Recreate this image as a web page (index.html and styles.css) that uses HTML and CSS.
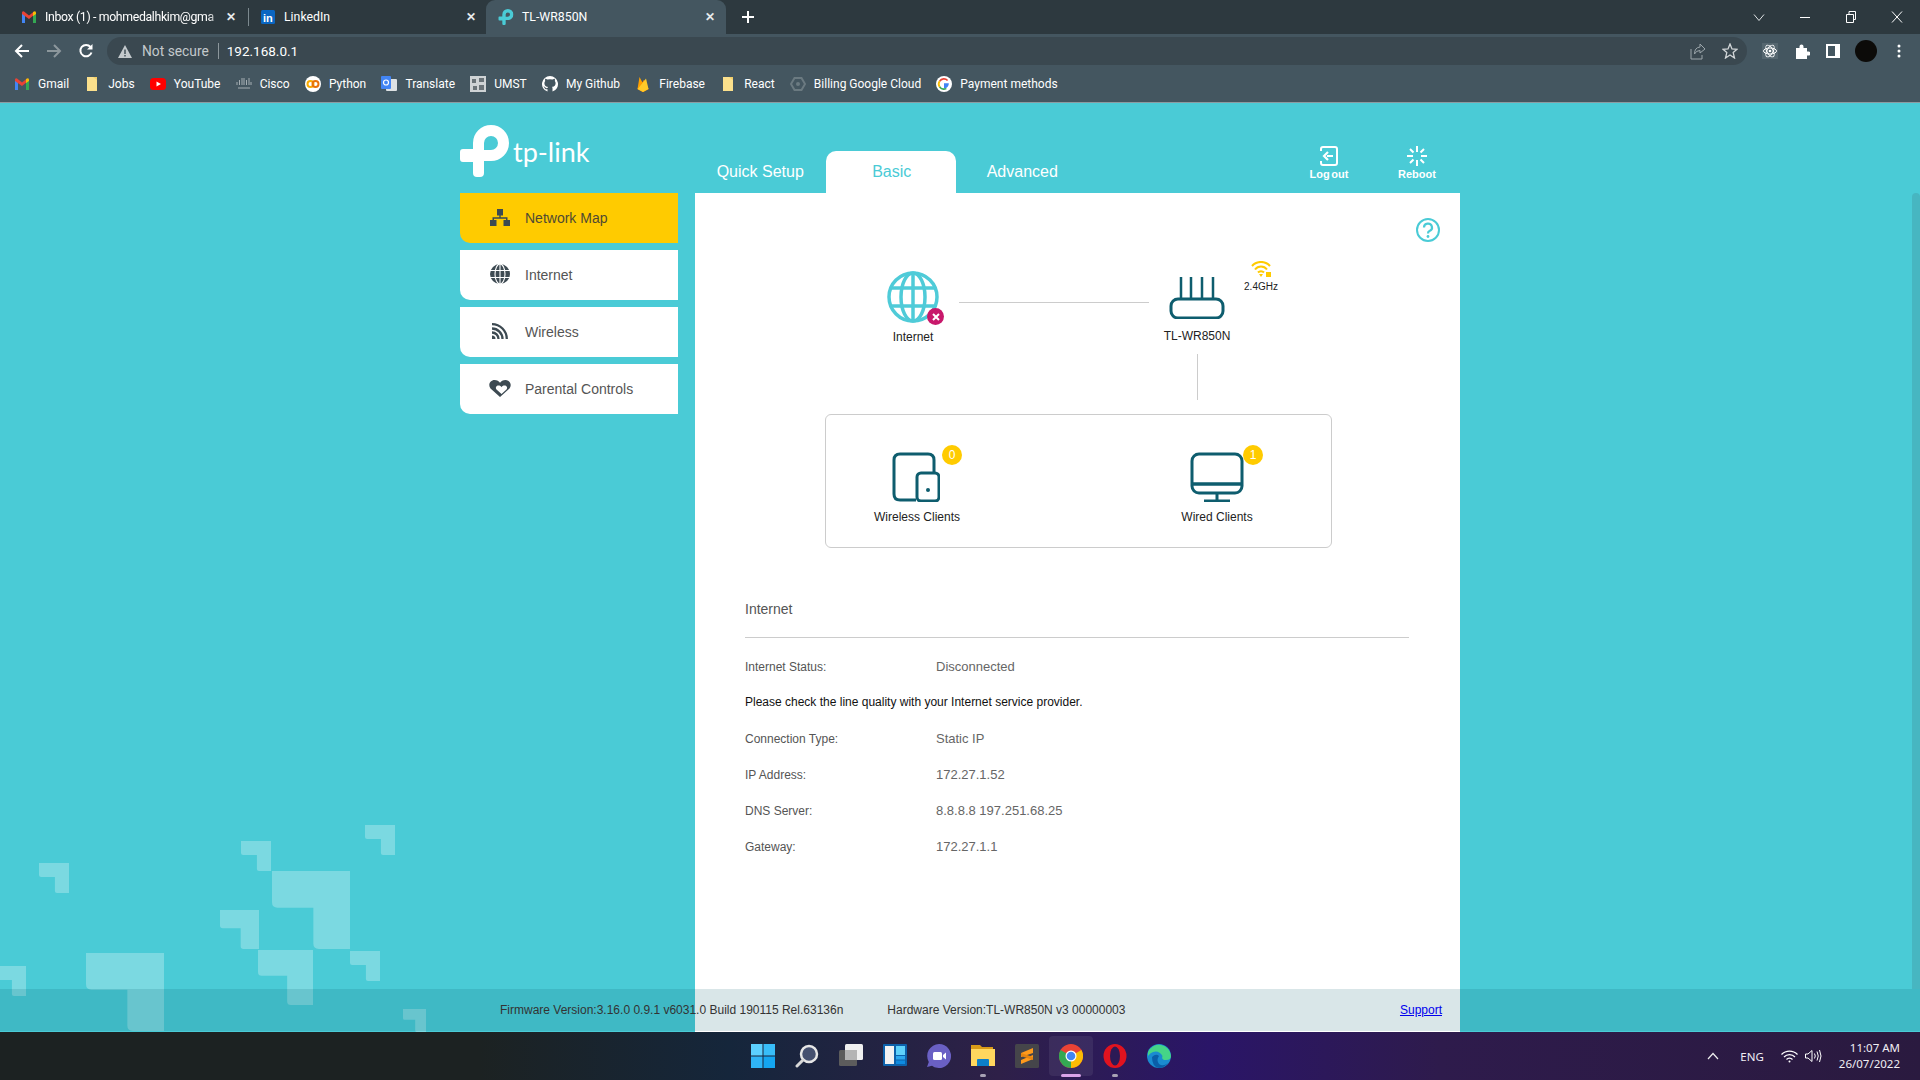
FILE: index.html
```html
<!DOCTYPE html>
<html lang="en">
<head>
    <meta charset="UTF-8">
    <title>TL-WR850N</title>
    <link rel="stylesheet" href="styles.css">
</head>
<body>
<svg class="defs" width="0" height="0">
    <symbol id="bit" viewBox="0 0 100 100"><path d="M0 0H100V100H60Q53 100 53 93V47H7Q0 47 0 40Z"/></symbol>
    <symbol id="folder" viewBox="0 0 16 16"><path d="M3 1H13V15H3Z" fill="#fbe08c"/><path d="M9 1H13V4Z" fill="#f3cf6a"/></symbol>
    <symbol id="tpmark" viewBox="0 0 50 52"><path fill-rule="evenodd" d="M13 18A18 18 0 1 1 31 36H24V48Q24 52 20 52H17Q13 52 13 48V37H3Q0 37 0 34V27Q0 24 3 24H13ZM24 18A7 7 0 1 1 31 25H24Z"/></symbol>
    <symbol id="gmail" viewBox="0 0 16 16"><path d="M1 14V4L4 6V14Z" fill="#4285f4"/><path d="M15 14V4L12 6V14Z" fill="#34a853"/><path d="M1 5V3.500Q1.500 1.800 3 2.500L8 6.500 13 2.500V6L8 10 1 5Z" fill="#ea4335"/><path d="M12 3.300 13 2.500Q14.500 1.800 15 3.500V5L12 7Z" fill="#fbbc04"/></symbol>
</svg>

<div class="browser">
    <div class="tabstrip">
        <div class="tab tab-first">
            <svg class="fav" viewBox="0 0 16 16"><use href="#gmail"/></svg>
            <span class="tab-title">Inbox (1) - mohmedalhkim@gma</span>
            <span class="tab-x">✕</span>
        </div>
        <div class="tab tab-second">
            <svg class="fav" viewBox="0 0 16 16"><rect x="1" y="1" width="14" height="14" rx="1.500" fill="#0a66c2"/><text x="3" y="12.500" class="fav-in">in</text></svg>
            <span class="tab-title">LinkedIn</span>
            <span class="tab-x">✕</span>
        </div>
        <div class="tab tab-active">
            <svg class="fav tp-fav" viewBox="0 0 50 52"><use href="#tpmark"/></svg>
            <span class="tab-title">TL-WR850N</span>
            <span class="tab-x">✕</span>
        </div>
        <svg class="new-tab" width="14" height="14" viewBox="0 0 14 14"><path d="M7 1V13M1 7H13" stroke="#fff" stroke-width="2"/></svg>
        <div class="win-controls">
            <svg width="12" height="12" viewBox="0 0 12 12"><path d="M1 3.500 6 9.500 11 3.500" fill="none" stroke="#dfe3e5"/></svg>
            <svg width="12" height="12" viewBox="0 0 12 12"><path d="M1 6.500H11" stroke="#fff"/></svg>
            <svg width="12" height="14" viewBox="0 0 12 14"><path d="M1.500 4.500H8.500V12.500H1.500ZM4 4.500V1.500H10.500V9.500H8.500" fill="none" stroke="#fff"/></svg>
            <svg width="12" height="12" viewBox="0 0 12 12"><path d="M1 .5 11 11.500M11 .5 1 11.500" stroke="#fff"/></svg>
        </div>
    </div>
    <div class="toolbar">
        <svg class="tool" viewBox="0 0 16 16"><path d="M15 8H2M8 2 2 8 8 14" fill="none" stroke="#fff" stroke-width="2"/></svg>
        <svg class="tool" viewBox="0 0 16 16"><path d="M1 8H14M8 2 14 8 8 14" fill="none" stroke="#8c979c" stroke-width="2"/></svg>
        <svg class="tool" viewBox="0 0 16 16"><path d="M13.500 9.500A5.700 5.700 0 1 1 12.500 4" fill="none" stroke="#fff" stroke-width="2"/><path d="M14.500 1V6.500H9Z" fill="#fff"/></svg>
        <div class="omnibox">
            <svg class="warn" width="14" height="13" viewBox="0 0 14 13"><path fill-rule="evenodd" d="M7 0 14 13H0ZM6.300 4.500V9H7.700V4.500ZM6.300 10V11.400H7.700V10Z" fill="#c3c9cc"/></svg>
            <span class="not-secure">Not secure</span>
            <span class="url">192.168.0.1</span>
            <div class="omni-right">
                <svg width="16" height="18" viewBox="0 0 16 18"><path d="M10 2 15 7 10 11V8.500Q6 8.500 4.500 12 4.500 5.500 10 5ZM1 7V17H12V13" fill="none" stroke="#9ca6ab"/></svg>
                <svg width="16" height="16" viewBox="0 0 16 16"><path d="M8 1 10 6 15 6.300 11.200 9.600 12.500 15 8 12 3.500 15 4.800 9.600 1 6.300 6 6Z" fill="none" stroke="#d3d7d9" stroke-width="1.300"/></svg>
            </div>
        </div>
        <div class="ext-row">
            <svg width="16" height="16" viewBox="0 0 16 16"><rect width="16" height="16" fill="#55666f"/><g fill="none" stroke="#fff"><ellipse cx="8" cy="8" rx="6.500" ry="3"/><ellipse cx="8" cy="8" rx="6.500" ry="3" transform="rotate(60 8 8)"/><ellipse cx="8" cy="8" rx="6.500" ry="3" transform="rotate(120 8 8)"/></g><circle cx="8" cy="8" r="1.300" fill="#fff"/></svg>
            <svg width="16" height="16" viewBox="0 0 16 16"><path d="M2 5H5.500V3.500A2 2 0 0 1 9.500 3.500V5H13V8.500H14.500A2 2 0 0 1 14.500 12.500H13V16H2Z" fill="#fff"/></svg>
            <svg width="14" height="14" viewBox="0 0 14 14"><path fill-rule="evenodd" d="M0 0H14V14H0ZM2 2V12H9V2Z" fill="#fff"/></svg>
            <span class="avatar"></span>
            <svg class="dots" width="4" height="14" viewBox="0 0 4 14"><circle cx="2" cy="2" r="1.500" fill="#fff"/><circle cx="2" cy="7" r="1.500" fill="#fff"/><circle cx="2" cy="12" r="1.500" fill="#fff"/></svg>
        </div>
    </div>
    <div class="bookmarks">
        <a class="mark"><svg viewBox="0 0 16 16"><use href="#gmail"/></svg>Gmail</a>
        <a class="mark"><svg viewBox="0 0 16 16"><use href="#folder"/></svg>Jobs</a>
        <a class="mark"><svg viewBox="0 0 16 16"><rect y="2" width="16" height="12" rx="3.500" fill="#f00"/><path d="M6.500 5.500 11 8 6.500 10.500Z" fill="#fff"/></svg>YouTube</a>
        <a class="mark"><svg viewBox="0 0 16 16"><path d="M1 6V9M3.500 4V9M6 2V9M8 2V9M10.500 4V9M13 2V9M15 6V9M2 12H14" stroke="#a5aeb3"/></svg>Cisco</a>
        <a class="mark"><svg viewBox="0 0 16 16"><circle cx="8" cy="8" r="8" fill="#fff"/><circle cx="5.500" cy="8" r="3" fill="none" stroke="#f9ab00" stroke-width="2"/><circle cx="10.500" cy="8" r="3" fill="none" stroke="#e8710a" stroke-width="2"/></svg>Python</a>
        <a class="mark"><svg viewBox="0 0 16 16"><rect x="5" y="3" width="11" height="12" rx="1" fill="#dde1e3"/><rect y="0" width="10" height="13" rx="1" fill="#4285f4"/><circle cx="5" cy="6.500" r="2.500" fill="none" stroke="#fff" stroke-width="1.200"/></svg>Translate</a>
        <a class="mark"><svg viewBox="0 0 16 16"><rect width="16" height="16" fill="#cfd3d5"/><path d="M2 3H6V7H2ZM9 2H14V6H9ZM3 10H7V14H3ZM9 9H14V14H9Z" fill="#6a7378"/></svg>UMST</a>
        <a class="mark"><svg viewBox="0 0 16 16"><path d="M8 0A8 8 0 0 0 5.500 15.600V13.200C3.300 13.700 2.800 12.200 2.800 12.200 2.400 11.300 1.900 11 1.900 11 1.200 10.500 2 10.500 2 10.500 2.800 10.600 3.200 11.300 3.200 11.300 3.900 12.500 5 12.200 5.500 12 5.600 11.500 5.800 11.100 6 10.900 4.200 10.700 2.400 10 2.400 7 2.400 6.100 2.700 5.400 3.200 4.900 3.100 4.700 2.800 3.900 3.300 2.800 3.300 2.800 4 2.600 5.500 3.600A7.500 7.500 0 0 1 10.500 3.600C12 2.600 12.700 2.800 12.700 2.800 13.200 3.900 12.900 4.700 12.800 4.900 13.300 5.400 13.600 6.100 13.600 7 13.600 10 11.800 10.700 10 10.900 10.300 11.100 10.500 11.600 10.500 12.300V15.600A8 8 0 0 0 8 0Z" fill="#fff"/></svg>My Github</a>
        <a class="mark"><svg viewBox="0 0 16 16"><path d="M2.500 13 4.500 1 7.500 6.500 9 4 13.500 13 8 16Z" fill="#ffa000"/><path d="M2.500 13 7.500 6.500 9 4 13.500 13 8 16Z" fill="#f57c00"/><path d="M2.500 13 11 2.500 13.500 13 8 16Z" fill="#ffca28"/></svg>Firebase</a>
        <a class="mark"><svg viewBox="0 0 16 16"><use href="#folder"/></svg>React</a>
        <a class="mark"><svg viewBox="0 0 16 16"><path d="M4.500 2H11.500L15 8 11.500 14H4.500L1 8Z" fill="none" stroke="#6b7a81" stroke-width="2"/><circle cx="8" cy="8" r="2" fill="#6b7a81"/></svg>Billing Google Cloud</a>
        <a class="mark"><svg viewBox="0 0 16 16"><circle cx="8" cy="8" r="8" fill="#fff"/><path d="M8 7.200H12.800Q13 11.800 8 12.500" fill="#4285f4"/><path d="M11 5A4.300 4.300 0 0 0 4.300 5.800L3 4.500A6 6 0 0 1 12.200 3.900Z" fill="#ea4335"/><path d="M4.300 5.800A4.300 4.300 0 0 0 4.300 10.200L3 11.500A6 6 0 0 1 3 4.500Z" fill="#fbbc04"/><path d="M4.300 10.200A4.300 4.300 0 0 0 9.500 12L11 13Q6 15.500 3 11.500Z" fill="#34a853"/></svg>Payment methods</a>
    </div>
</div>

<div class="page">
    <svg class="decor" width="440" height="220" viewBox="0 -20 440 220" fill="#fff" fill-opacity=".27">
        <use href="#bit" x="39" y="31" width="30" height="30"/>
        <use href="#bit" x="241" y="9" width="30" height="30"/>
        <use href="#bit" x="365" y="-7" width="30" height="30"/>
        <use href="#bit" x="272" y="39" width="78" height="78"/>
        <use href="#bit" x="220" y="78" width="39" height="39"/>
        <use href="#bit" x="258" y="118" width="55" height="55"/>
        <use href="#bit" x="350" y="119" width="30" height="30"/>
        <use href="#bit" x="86" y="121" width="78" height="78"/>
        <use href="#bit" x="-8" y="134" width="38" height="30"/>
        <use href="#bit" x="403" y="177" width="23" height="23"/>
    </svg>
    <div class="thumb"></div>

    <div class="wrap">
        <header class="head">
            <div class="logo">
                <svg class="logo-mark" width="50" height="52"><use href="#tpmark"/></svg>
                <span class="logo-text">tp-link</span>
            </div>
            <nav class="tabs">
                <a class="tab-link">Quick Setup</a>
                <a class="tab-link on">Basic</a>
                <a class="tab-link">Advanced</a>
            </nav>
            <div class="actions">
                <a class="action">
                    <svg width="22" height="22" viewBox="0 0 22 22" fill="none" stroke="#fff" stroke-width="2"><path d="M3 6V4Q3 2 5 2H17Q19 2 19 4V18Q19 20 17 20H5Q3 20 3 18V16"/><path d="M10 7 6 11 10 15" stroke-width="2.200"/><path d="M9 11H15"/></svg>
                    <span>Log out</span>
                </a>
                <a class="action">
                    <svg width="22" height="22" viewBox="0 0 22 22" stroke="#fff" stroke-width="2"><path d="M11 1V7M11 15V21M1 11H7M15 11H21M4 4 7.500 7.500M14.500 14.500 18 18M18 4 14.500 7.500M7.500 14.500 4 18"/></svg>
                    <span>Reboot</span>
                </a>
            </div>
        </header>

        <div class="main">
            <ul class="side">
                <li class="side-item on">
                    <span class="side-icon"><svg width="20" height="17" viewBox="0 0 20 17" fill="#3d4a52"><rect x="7" y="0" width="6" height="6.500"/><rect x="0" y="11" width="6.500" height="6"/><rect x="13.500" y="11" width="6.500" height="6"/><path d="M9.300 6H10.700V8.300H17.500V11H16V9.700H4V11H2.500V8.300H9.300Z"/></svg></span>
                    Network Map
                </li>
                <li class="side-item">
                    <span class="side-icon"><svg width="20" height="20" viewBox="0 0 20 20"><circle cx="10" cy="10" r="10" fill="#3d4a52"/><g fill="none" stroke="#fff" stroke-width="1.100"><ellipse cx="10" cy="10" rx="5" ry="10"/><path d="M0 6.500H20M0 13.500H20M10 0V20"/></g></svg></span>
                    Internet
                </li>
                <li class="side-item">
                    <span class="side-icon"><svg width="16" height="16" viewBox="0 0 16 16" fill="none" stroke="#3d4a52" stroke-width="2.300"><path d="M0 1.200A14.800 14.800 0 0 1 14.800 16M0 5.500A10.500 10.500 0 0 1 10.500 16M0 9.500A6.500 6.500 0 0 1 6.500 16"/><path d="M0 12.500A3.500 3.500 0 0 1 3.500 16H0Z" fill="#3d4a52" stroke="none"/></svg></span>
                    Wireless
                </li>
                <li class="side-item">
                    <span class="side-icon"><svg width="22" height="17" viewBox="0 0 22 17"><path d="M11 17 1.500 8.500C-1.500 4.500 1.500 0 5.500 0 8 0 10 1.200 11 2.800 12 1.200 14 0 16.500 0 20.500 0 23.500 4.500 20.500 8.500Z" fill="#3d4a52"/><path d="M12.500 14 7.500 9.500C6 7.500 7.500 5.500 9.500 5.500 11 5.500 12 6.200 12.500 7.200 13 6.200 14 5.500 15.500 5.500 17.500 5.500 19 7.500 17.500 9.500Z" fill="#fff"/></svg></span>
                    Parental Controls
                </li>
            </ul>

            <section class="panel">
                <div class="map">
                    <svg class="help" width="24" height="24" viewBox="0 0 24 24" fill="none" stroke="#4acbd6" stroke-width="2"><circle cx="12" cy="12" r="11"/><path d="M8 9.500A4 3.800 0 1 1 13.500 13Q12 13.700 12 15.500" stroke-width="2.200"/><circle cx="12" cy="18.500" r="1.400" fill="#4acbd6" stroke="none"/></svg>

                    <div class="node node-net">
                        <div class="node-pic">
                            <svg width="52" height="52" viewBox="0 0 52 52" fill="none" stroke="#4fcbd8" stroke-width="3.500"><circle cx="26" cy="26" r="24"/><ellipse cx="26" cy="26" rx="12" ry="24"/><path d="M26 2V50M5 17H47M5 35H47"/></svg>
                            <span class="err"><svg width="8" height="8" viewBox="0 0 8 8"><path d="M1 1 7 7M7 1 1 7" stroke="#fff" stroke-width="2"/></svg></span>
                        </div>
                        <span class="node-name">Internet</span>
                    </div>
                    <div class="link link-h"></div>
                    <div class="node node-router">
                        <svg width="56" height="42" viewBox="0 0 56 42" fill="none" stroke="#0e5d6e" stroke-width="3"><rect x="2" y="22" width="52" height="19" rx="7"/><path d="M12 0V22M22 0V22M33 0V22M44 0V22" stroke-width="2.500"/></svg>
                        <span class="node-name">TL-WR850N</span>
                    </div>
                    <div class="node node-wifi">
                        <svg width="20" height="16" viewBox="0 0 20 16" fill="none" stroke="#ffcb00" stroke-width="2"><path d="M1 5A12 12 0 0 1 19 5M4 8.500A7.500 7.500 0 0 1 16 8.500M7 11.500A4 4 0 0 1 13 11.500"/><path d="M8 13H12L10 16Z" fill="#ffcb00" stroke="none"/><path d="M15 11H20V16H15Z" fill="#ffcb00" stroke="none"/></svg>
                        <span class="wifi-name">2.4GHz</span>
                    </div>
                    <div class="link link-v"></div>

                    <div class="clients">
                        <div class="client">
                            <div class="client-pic">
                                <svg width="48" height="50" viewBox="0 0 48 50" fill="none" stroke="#0e5d6e" stroke-width="3"><path d="M24 48H8Q2 48 2 42V8Q2 2 8 2H36Q42 2 42 8V20"/><rect x="25" y="21" width="22" height="28" rx="4"/><circle cx="36" cy="38" r="2" fill="#0e5d6e" stroke="none"/></svg>
                                <span class="count">0</span>
                            </div>
                            <span class="node-name">Wireless Clients</span>
                        </div>
                        <div class="client client-wired">
                            <div class="client-pic">
                                <svg width="54" height="50" viewBox="0 0 54 50" fill="none" stroke="#0e5d6e" stroke-width="3"><rect x="2" y="2" width="50" height="39" rx="7"/><path d="M2 32H52" stroke-width="3.500"/><path d="M27 41V48M14 49H40"/></svg>
                                <span class="count count-wired">1</span>
                            </div>
                            <span class="node-name">Wired Clients</span>
                        </div>
                    </div>
                </div>

                <div class="info">
                    <h2 class="info-title">Internet</h2>
                    <div class="row"><span class="row-key">Internet Status:</span><span class="row-val">Disconnected</span></div>
                    <div class="row row-note">Please check the line quality with your Internet service provider.</div>
                    <div class="row"><span class="row-key">Connection Type:</span><span class="row-val">Static IP</span></div>
                    <div class="row"><span class="row-key">IP Address:</span><span class="row-val">172.27.1.52</span></div>
                    <div class="row"><span class="row-key">DNS Server:</span><span class="row-val">8.8.8.8 197.251.68.25</span></div>
                    <div class="row"><span class="row-key">Gateway:</span><span class="row-val">172.27.1.1</span></div>
                </div>
            </section>
        </div>
    </div>

    <footer class="foot">
        <div class="foot-in">
            <span class="firmware">Firmware Version:3.16.0 0.9.1 v6031.0 Build 190115 Rel.63136n</span>
            <span class="hardware">Hardware Version:TL-WR850N v3 00000003</span>
            <a class="support">Support</a>
        </div>
    </footer>
</div>

<div class="taskbar">
    <div class="task-icons">
        <span class="task"><svg viewBox="0 0 24 24"><path d="M0 0H11.500V11.500H0Z" fill="#5cd0ff"/><path d="M12.500 0H24V11.500H12.500Z" fill="#38bdf8"/><path d="M0 12.500H11.500V24H0Z" fill="#2fb4f5"/><path d="M12.500 12.500H24V24H12.500Z" fill="#14a5f0"/></svg></span>
        <span class="task"><svg viewBox="0 0 24 24"><circle cx="14" cy="10" r="8" fill="#45506f" stroke="#e6e6e6" stroke-width="2.500"/><path d="M8 16 2 22" stroke="#d8d8d8" stroke-width="3" stroke-linecap="round"/></svg></span>
        <span class="task"><svg viewBox="0 0 24 24"><rect x="6" y="0" width="18" height="16" rx="1.500" fill="#f0f0f0"/><rect x="0" y="6" width="18" height="16" rx="1.500" fill="#5c5c5c"/><rect x="6" y="6" width="12" height="10" fill="#b4b4b4"/></svg></span>
        <span class="task"><svg viewBox="0 0 24 24"><rect width="24" height="22" rx="1" fill="#0d62ab"/><rect x="2" y="2" width="9" height="18" fill="#f2f2f2"/><rect x="13" y="2" width="9" height="9" fill="#5fd2fb"/><rect x="13" y="12" width="9" height="3.500" fill="#2ca8ee"/><rect x="13" y="16.500" width="9" height="3.500" fill="#0f8be0"/></svg></span>
        <span class="task"><svg viewBox="0 0 24 24"><path d="M12 0A12 12 0 1 1 5 21.700L0 23 1.800 18A12 12 0 0 1 12 0Z" fill="#6a60c4"/><rect x="6" y="8" width="9" height="8" rx="1.500" fill="#fff"/><path d="M16 11 19 8.500V15.500L16 13Z" fill="#fff"/></svg></span>
        <span class="task task-open"><svg viewBox="0 0 24 24"><path d="M0 1H9L11 3H22V8H0Z" fill="#d99b18"/><path d="M0 5H24V22H0Z" fill="#ffd75e"/><path d="M7 15H17Q18 15 18 16V22H6V16Q6 15 7 15Z" fill="#0c7fc9"/></svg></span>
        <span class="task"><svg viewBox="0 0 24 24"><rect width="24" height="24" rx="1.500" fill="#45454a"/><path d="M18 4 6 9V13L18 9ZM18 11 6 16V20L18 15Z" fill="#ff9a1c"/><path d="M6 9 18 13V16L6 12Z" fill="#e68410"/></svg></span>
        <span class="task task-on"><svg viewBox="0 0 24 24"><circle cx="12" cy="12" r="12" fill="#ea4335"/><path d="M12 12 1.600 6A12 12 0 0 0 12 24Z" fill="#34a853"/><path d="M12 12 22.400 6A12 12 0 0 1 12 24Z" fill="#fbbc04"/><circle cx="12" cy="12" r="5.500" fill="#fff"/><circle cx="12" cy="12" r="4.300" fill="#4285f4"/></svg></span>
        <span class="task task-open"><svg viewBox="0 0 24 24"><ellipse cx="12" cy="12" rx="11.500" ry="12" fill="#e0131f"/><ellipse cx="12" cy="12" rx="5" ry="9.500" fill="#2c1a55"/></svg></span>
        <span class="task"><svg viewBox="0 0 24 24"><circle cx="12" cy="12" r="12" fill="#1a8bd0"/><path d="M1 8A12 12 0 0 1 24 12Q24 16 19 16 14 16 15.500 12 12 6 6 8 3 9 1 12Z" fill="#45d487"/><path d="M5 13Q9 9 12 12 9 16 12 20 16 23 21 19 17 24 12 24 5 23 5 13Z" fill="#0a5ea8"/></svg></span>
    </div>
    <div class="tray">
        <svg width="12" height="8" viewBox="0 0 12 8"><path d="M1 7 6 1.500 11 7" fill="none" stroke="#eee" stroke-width="1.200"/></svg>
        <span class="lang">ENG</span>
        <svg class="tray-wifi" width="17" height="13" viewBox="0 0 17 13" fill="none" stroke="#fff" stroke-width="1.200"><path d="M.5 4.500A11 11 0 0 1 16.500 4.500M3 7A7.500 7.500 0 0 1 14 7M5.500 9.500A4 4 0 0 1 11.500 9.500"/><circle cx="8.500" cy="11.500" r="1" fill="#fff" stroke="none"/></svg>
        <svg class="tray-vol" width="17" height="14" viewBox="0 0 17 14" fill="none" stroke="#fff"><path d="M.5 5V9H3L7 12.500V1.500L3 5ZM9.500 4.500Q11 7 9.500 9.500M12 2.500Q14.500 7 12 11.500M14.500 1Q17.500 7 14.500 13"/></svg>
        <div class="clock"><span>11:07 AM</span><span>26/07/2022</span></div>
    </div>
</div>
</body>
</html>
```

FILE: styles.css
```css
* {
    margin: 0;
    padding: 0;
    box-sizing: border-box;
}

html, body {
    height: 100%;
    overflow: hidden;
}

body {
    display: flex;
    flex-direction: column;
    width: 1920px;
    height: 1080px;
    font-family: "Liberation Sans", Arial, sans-serif;
    font-size: 12px;
    color: #555;
    background: #4acbd6;
}

.defs {
    position: absolute;
}

/* browser chrome */
.browser {
    height: 103px;
    flex: none;
    font-family: Roboto, "Noto Sans", sans-serif;
    color: #fff;
    background: #445660;
    border-bottom: 1px solid #8c9ba1;
}

.tabstrip {
    display: flex;
    align-items: center;
    height: 34px;
    background: #2d393f;
}

.tab {
    display: flex;
    align-items: center;
    width: 240px;
    height: 34px;
    padding: 0 9px 0 14px;
    font-size: 12.300px;
    position: relative;
}

.tab-first {
    width: 246px;
    padding-left: 21px;
    padding-right: 8px;
}

.tab-first .tab-title {
    letter-spacing: -.35px;
    -webkit-mask-image: linear-gradient(90deg, #000 90%, transparent 99%);
    mask-image: linear-gradient(90deg, #000 90%, transparent 99%);
}

.tab-second {
    width: 240px;
    padding-left: 14px;
    padding-right: 8px;
}

.tab-second::before {
    content: "";
    position: absolute;
    left: 2px;
    top: 8px;
    height: 18px;
    border-left: 1px solid #7c898f;
}

.tab-active {
    width: 240px;
    padding-left: 12px;
    padding-right: 9px;
    background: #445660;
    border-radius: 9px 9px 0 0;
}

.fav {
    width: 16px;
    height: 16px;
    flex: none;
    margin-right: 8px;
}

.tp-fav {
    fill: #4acbd6;
}

.fav-in {
    font: bold 11px "Liberation Sans", sans-serif;
    fill: #fff;
}

.tab-title {
    flex: 1;
    white-space: nowrap;
}

.tab-x {
    font-size: 12px;
    font-weight: bold;
    color: #e8ebec;
    width: 12px;
}

.new-tab {
    margin-left: 15px;
}

.win-controls {
    margin-left: auto;
    display: flex;
    align-items: center;
    gap: 34px;
    padding-right: 17px;
}

.toolbar {
    display: flex;
    align-items: center;
    height: 34px;
    padding-left: 14px;
}

.tool {
    width: 16px;
    height: 16px;
    margin-right: 16px;
}

.omnibox {
    display: flex;
    align-items: center;
    margin-left: -3px;
    width: 1640px;
    height: 28px;
    padding: 0 9px 0 11px;
    border-radius: 14px;
    background: #3a4850;
    font-size: 13.500px;
}

.warn {
    margin-right: 10px;
}

.not-secure {
    color: #c3c9cc;
    font-size: 13.800px;
    padding-right: 9px;
    border-right: 1px solid #8c979c;
    line-height: 16px;
}

.url {
    margin-left: 8px;
}

.omni-right {
    margin-left: auto;
    display: flex;
    align-items: center;
    gap: 16px;
}

.ext-row {
    display: flex;
    align-items: center;
    gap: 16px;
    margin-left: 15px;
}

.avatar {
    width: 22px;
    height: 22px;
    border-radius: 50%;
    background: #0c0b09;
    margin: 0 -2px 0 -1px;
}

.dots {
    margin-left: 6px;
}

.bookmarks {
    display: flex;
    align-items: center;
    height: 34px;
    padding: 0 0 2px 14px;
    gap: 15.200px;
    font-size: 12px;
}

.mark {
    display: flex;
    align-items: center;
    gap: 8px;
    white-space: nowrap;
}

.mark svg {
    width: 16px;
    height: 16px;
    flex: none;
}

/* router page */
.page {
    position: relative;
    height: 929px;
    flex: none;
    overflow: hidden;
    background: #4acbd6;
}

.decor {
    position: absolute;
    left: 0;
    top: 709px;
}

.thumb {
    position: absolute;
    right: 0;
    top: 90px;
    bottom: 43px;
    width: 8px;
    border-radius: 4px 4px 0 0;
    background: #47b6c1;
}

.wrap {
    position: relative;
    width: 1000px;
    margin: 0 auto;
}

.head {
    display: flex;
    height: 90px;
}

.logo {
    display: flex;
    width: 235px;
    padding-top: 22px;
    color: #fff;
}

.logo-mark {
    fill: #fff;
}

.logo-text {
    font-family: Lato, sans-serif;
    font-size: 27px;
    line-height: 32px;
    margin: 11px 0 0 3px;
}

.tabs {
    display: flex;
    align-items: flex-end;
}

.tab-link {
    width: 130.500px;
    height: 42px;
    font-size: 16px;
    line-height: 42px;
    text-align: center;
    color: #fff;
}

.tab-link.on, .tab-link.on + .tab-link {
    padding-left: 2px;
}

.tab-link.on {
    color: #4acbd6;
    background: #fff;
    border-radius: 10px 10px 0 0;
}

.actions {
    display: flex;
    margin-left: auto;
    margin-right: -1px;
    padding-top: 42px;
}

.action {
    display: flex;
    flex-direction: column;
    align-items: center;
    width: 88px;
    font-size: 11px;
    font-weight: bold;
    word-spacing: -1.500px;
    color: #fff;
}

.action span {
    margin-top: 1px;
}

.main {
    display: flex;
    gap: 17px;
}

.side {
    display: flex;
    flex-direction: column;
    gap: 7px;
    width: 218px;
    list-style: none;
}

.side-item {
    display: flex;
    align-items: center;
    gap: 13px;
    height: 50px;
    padding-left: 28px;
    font-size: 14px;
    background: #fff;
    border-radius: 0 0 0 10px;
}

.side-item.on {
    background: #ffcb00;
    color: #4f4a33;
}

.side-icon {
    display: flex;
    justify-content: center;
    align-items: center;
    width: 24px;
    margin-top: -2px;
}

.panel {
    flex: 1;
    height: 839px;
    background: #fff;
}

/* network diagram */
.map {
    position: relative;
    height: 354px;
}

.help {
    position: absolute;
    left: 721px;
    top: 25px;
}

.node {
    position: absolute;
    display: flex;
    flex-direction: column;
    align-items: center;
}

.node-name {
    line-height: 14px;
    color: #222;
}

.node-net {
    left: 168px;
    top: 78px;
    width: 100px;
    gap: 7px;
}

.node-pic, .client-pic {
    position: relative;
    display: flex;
}

.err {
    position: absolute;
    right: -5px;
    bottom: -2px;
    display: flex;
    align-items: center;
    justify-content: center;
    width: 17px;
    height: 17px;
    border-radius: 50%;
    background: #c8186b;
}

.node-router {
    left: 442px;
    top: 84px;
    width: 120px;
    gap: 10px;
}

.node-wifi {
    left: 541px;
    top: 68px;
    width: 50px;
    gap: 4px;
}

.wifi-name {
    font-size: 10px;
    line-height: 12px;
    color: #222;
}

.link {
    position: absolute;
    background: #ccc;
}

.link-h {
    left: 264px;
    top: 109px;
    width: 190px;
    height: 1px;
}

.link-v {
    left: 502px;
    top: 161px;
    width: 1px;
    height: 46px;
}

.clients {
    position: absolute;
    left: 130px;
    top: 221px;
    display: flex;
    gap: 180px;
    width: 507px;
    height: 134px;
    padding: 37px 0 0 31px;
    border: 1px solid #ccc;
    border-radius: 6px;
}

.client {
    display: flex;
    flex-direction: column;
    align-items: center;
    gap: 8px;
    width: 120px;
}

.client-pic {
    margin-right: 2px;
}

.client-wired .client-pic {
    margin-right: 0;
}

.count {
    position: absolute;
    right: -22px;
    top: -7px;
    width: 20px;
    height: 20px;
    border-radius: 50%;
    font-size: 12px;
    line-height: 20px;
    text-align: center;
    color: #fff;
    background: #ffcb00;
}

.count-wired {
    right: -19px;
}

/* internet details */
.info {
    padding: 52px 51px 0 50px;
}

.info-title {
    margin-bottom: 11px;
    padding-bottom: 18px;
    font-size: 14px;
    font-weight: normal;
    line-height: 20px;
    color: #555;
    border-bottom: 1px solid #ccc;
}

.row {
    display: flex;
    align-items: baseline;
    height: 36px;
    line-height: 35px;
}

.row-key {
    width: 191px;
}

.row-val {
    font-size: 13px;
    color: #666;
}

.row-note {
    color: #111;
}

.foot {
    position: absolute;
    left: 0;
    right: 0;
    bottom: 1px;
    height: 42px;
    background: rgba(0, 87, 100, .15);
    color: #333;
}

.foot-in {
    display: flex;
    align-items: center;
    width: 1000px;
    height: 100%;
    margin: 0 auto;
    padding: 0 18px 0 40px;
}

.hardware {
    margin-left: 44px;
}

.support {
    margin-left: auto;
    color: #0000ee;
    text-decoration: underline;
}

/* windows taskbar */
.taskbar {
    position: relative;
    display: flex;
    justify-content: center;
    height: 48px;
    flex: none;
    background: linear-gradient(90deg, #1c2222 0, #1c2222 25%, #15263b 38%, #2e2048 52%, #2a1568 63%, #2e1b4c 75%, #2a1a3f 100%);
    font-family: "Noto Sans", sans-serif;
    color: #f0eef4;
}

.task-icons {
    display: flex;
    align-items: center;
    padding-left: 2px;
}

.task {
    position: relative;
    display: flex;
    align-items: center;
    justify-content: center;
    width: 44px;
    height: 40px;
}

.task svg {
    width: 24px;
    height: 24px;
}

.task-open::after, .task-on::after {
    content: "";
    position: absolute;
    left: 19px;
    bottom: -1px;
    width: 6px;
    height: 3px;
    border-radius: 2px;
    background: #a8a2b4;
}

.task-on {
    background: rgba(255, 255, 255, .07);
    border-radius: 4px;
}

.task-on::after {
    left: 12px;
    width: 20px;
    background: #d9a3e8;
}

.tray {
    position: absolute;
    right: 20px;
    top: 0;
    display: flex;
    align-items: center;
    height: 48px;
}

.lang {
    margin: 0 17px 0 21px;
    font-size: 11.500px;
}

.tray-vol {
    margin: 0 17px 0 7px;
}

.clock {
    display: flex;
    flex-direction: column;
    align-items: flex-end;
    font-size: 11.500px;
    line-height: 16px;
}
```
